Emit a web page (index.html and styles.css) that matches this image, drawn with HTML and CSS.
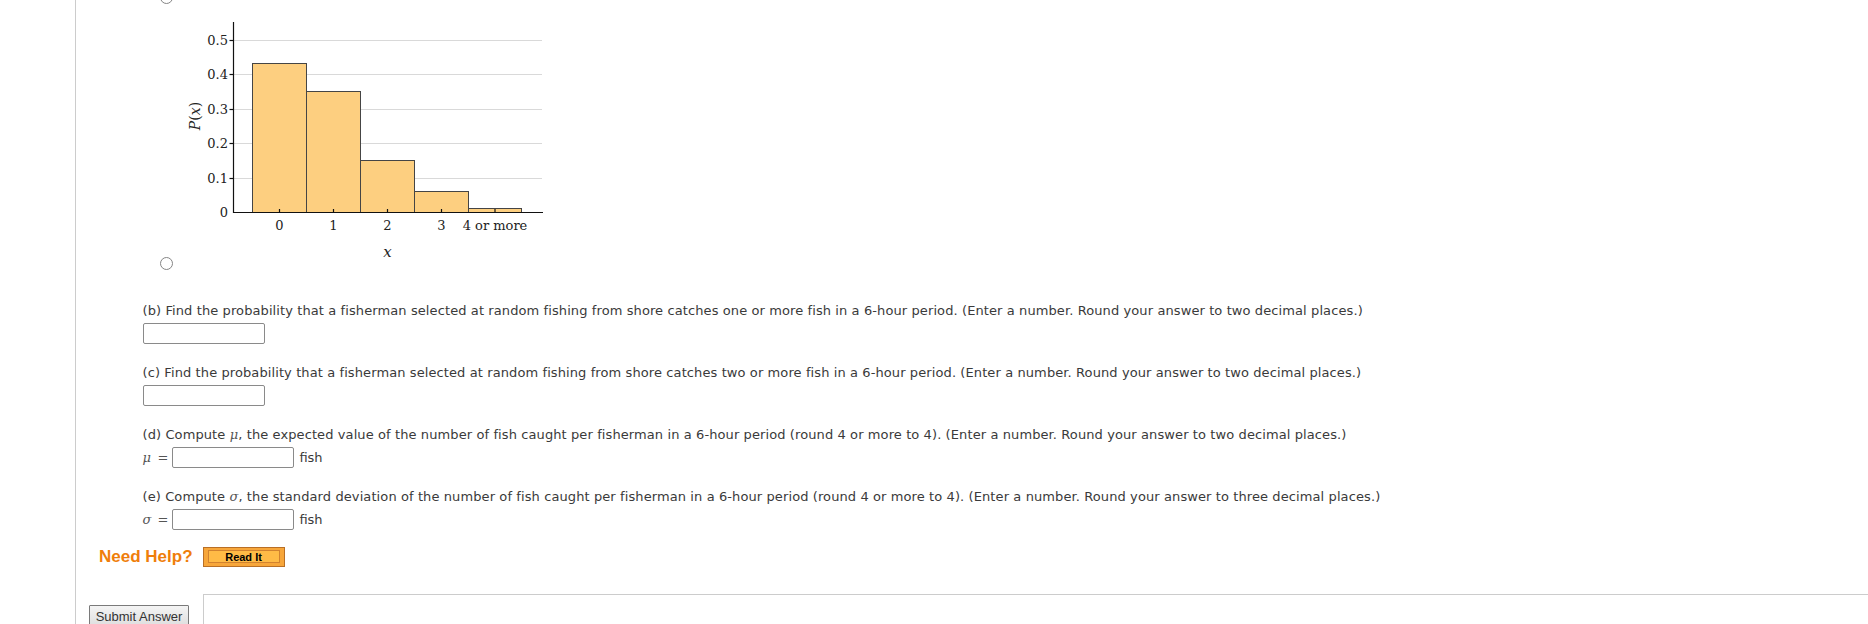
FILE: index.html
```html
<!DOCTYPE html>
<html>
<head>
<meta charset="utf-8">
<link rel="stylesheet" href="styles.css">
</head>
<body>
<div class="page">
  <div class="option option-prev"><span class="radio"></span></div>
  <div class="option option-graph">
    <span class="radio"></span>
    <svg class="graph" width="370" height="255" viewBox="0 0 370 255">
      <g class="grid">
        <line x1="53.5" y1="163.5" x2="362" y2="163.5"/>
        <line x1="53.5" y1="128.5" x2="362" y2="128.5"/>
        <line x1="53.5" y1="94.5" x2="362" y2="94.5"/>
        <line x1="53.5" y1="59.5" x2="362" y2="59.5"/>
        <line x1="53.5" y1="25.5" x2="362" y2="25.5"/>
      </g>
      <g class="bars">
        <rect x="72.5" y="48.5" width="54" height="149"/>
        <rect x="126.5" y="76.5" width="54" height="121"/>
        <rect x="180.5" y="145.5" width="54" height="52"/>
        <rect x="234.5" y="176.5" width="54" height="21"/>
        <rect x="288.5" y="193.5" width="53" height="4"/>
      </g>
      <g class="axis">
        <line x1="53.5" y1="7" x2="53.5" y2="198"/>
        <line x1="53" y1="197.5" x2="363" y2="197.5"/>
        <line x1="49.5" y1="163.5" x2="53.5" y2="163.5"/>
        <line x1="49.5" y1="128.5" x2="53.5" y2="128.5"/>
        <line x1="49.5" y1="94.5" x2="53.5" y2="94.5"/>
        <line x1="49.5" y1="59.5" x2="53.5" y2="59.5"/>
        <line x1="49.5" y1="25.5" x2="53.5" y2="25.5"/>
        <line x1="99.5" y1="194" x2="99.5" y2="197.5"/>
        <line x1="153.5" y1="194" x2="153.5" y2="197.5"/>
        <line x1="207.5" y1="194" x2="207.5" y2="197.5"/>
        <line x1="261.5" y1="194" x2="261.5" y2="197.5"/>
        <line x1="315" y1="194" x2="315" y2="197.5"/>
      </g>
      <g class="ylabels">
        <text x="48" y="202">0</text>
        <text x="48" y="168">0.1</text>
        <text x="48" y="133">0.2</text>
        <text x="48" y="99">0.3</text>
        <text x="48" y="64">0.4</text>
        <text x="48" y="30">0.5</text>
      </g>
      <g class="xlabels">
        <text x="99.5" y="215">0</text>
        <text x="153.5" y="215">1</text>
        <text x="207.5" y="215">2</text>
        <text x="261.5" y="215">3</text>
        <text x="315" y="215">4 or more</text>
      </g>
      <text class="xtitle" x="207.5" y="242">x</text>
      <text class="ytitle" transform="translate(20,101) rotate(-90)"><tspan class="it">P</tspan>(<tspan class="it">x</tspan>)</text>
    </svg>
  </div>

  <div class="parts">
    <div class="part">
      <div class="prompt">(b) Find the probability that a fisherman selected at random fishing from shore catches one or more fish in a 6-hour period. (Enter a number. Round your answer to two decimal places.)</div>
      <div class="answer"><input class="box" type="text"></div>
    </div>
    <div class="part">
      <div class="prompt">(c) Find the probability that a fisherman selected at random fishing from shore catches two or more fish in a 6-hour period. (Enter a number. Round your answer to two decimal places.)</div>
      <div class="answer"><input class="box" type="text"></div>
    </div>
    <div class="part">
      <div class="prompt">(d) Compute <span class="math">μ</span>, the expected value of the number of fish caught per fisherman in a 6-hour period (round 4 or more to 4). (Enter a number. Round your answer to two decimal places.)</div>
      <div class="answer"><span class="math var">μ</span><span class="eq">=</span><input class="box" type="text"><span class="unit">fish</span></div>
    </div>
    <div class="part part-last">
      <div class="prompt">(e) Compute <span class="math">σ</span>, the standard deviation of the number of fish caught per fisherman in a 6-hour period (round 4 or more to 4). (Enter a number. Round your answer to three decimal places.)</div>
      <div class="answer"><span class="math var">σ</span><span class="eq">=</span><input class="box" type="text"><span class="unit">fish</span></div>
    </div>
  </div>

  <div class="help">
    <span class="need-help">Need Help?</span>
    <button class="read-it" type="button"><span class="read-inner">Read It</span></button>
  </div>

  <div class="submit-row">
    <button class="submit" type="button">Submit Answer</button>
    <div class="notes"></div>
  </div>
</div>
</body>
</html>
```

FILE: styles.css
```css
html, body {
  margin: 0;
  padding: 0;
  overflow: hidden;
  background: #fff;
}

.page {
  margin-left: 75px;
  border-left: 1px solid #cccccc;
  min-height: 720px;
  font-family: "DejaVu Sans", Verdana, sans-serif;
  font-size: 13px;
  color: #3a3a3a;
}

.option {
  display: flex;
  align-items: flex-end;
}

.option-prev {
  margin-top: -9px;
  height: 13px;
}

.option-graph {
  margin-top: 11px;
}

.radio {
  flex: none;
  display: block;
  width: 13px;
  height: 13px;
  box-sizing: border-box;
  border: 1px solid #858585;
  border-radius: 50%;
  background: #fff;
  margin-left: 84px;
}

.graph {
  display: block;
  margin-left: 7px;
}

.graph .grid line {
  stroke: #d9d9d9;
  stroke-width: 1;
}

.graph .bars rect {
  fill: #fdcf80;
  stroke: #454545;
  stroke-width: 1;
}

.graph .axis line {
  stroke: #111;
  stroke-width: 1.2;
}

.graph text {
  font-family: "DejaVu Serif", "Liberation Serif", serif;
  font-size: 13px;
  fill: #222;
}

.graph .ylabels text {
  text-anchor: end;
}

.graph .xlabels text {
  text-anchor: middle;
}

.graph .xtitle {
  font-size: 15px;
  font-style: italic;
  text-anchor: middle;
}

.graph .ytitle {
  font-size: 14px;
  text-anchor: middle;
}

.graph .ytitle .it {
  font-style: italic;
}

.parts {
  margin-top: 33px;
  padding-left: 66.5px;
}

.part {
  margin-bottom: 21px;
}

.part-last {
  margin-bottom: 0;
}

.prompt {
  line-height: 16px;
  white-space: nowrap;
  letter-spacing: 0.1px;
}

.math {
  font-family: "DejaVu Serif", "Liberation Serif", serif;
  font-style: italic;
  color: #555;
}

.answer {
  display: flex;
  align-items: center;
  margin-top: 4px;
  height: 21px;
}

.var {
  width: 10px;
  font-size: 13px;
}

.eq {
  margin-left: 5px;
  margin-right: 4px;
  color: #555;
}

.box {
  box-sizing: border-box;
  width: 122px;
  height: 21px;
  margin: 0;
  padding: 1px 3px;
  border: 1px solid #8a8a8a;
  border-radius: 2px;
  background: #fff;
  font: 13px "DejaVu Sans", sans-serif;
}

.unit {
  margin-left: 5px;
}

.help {
  display: flex;
  align-items: center;
  margin-top: 17px;
  padding-left: 23px;
}

.need-help {
  font-family: "Liberation Sans", Arial, sans-serif;
  font-weight: bold;
  font-size: 17px;
  line-height: 20px;
  color: #ef7e0b;
}

.read-it {
  box-sizing: border-box;
  width: 82px;
  height: 20px;
  margin: 0 0 0 10px;
  padding: 2px 4px 3px 4px;
  border: 1px solid #b96f25;
  background: #f7a63a;
  display: flex;
  cursor: pointer;
}

.read-inner {
  flex: 1;
  display: flex;
  align-items: center;
  justify-content: center;
  border: 1px solid #d1822f;
  background: #ffbb46;
  font-family: "Liberation Sans", Arial, sans-serif;
  font-weight: bold;
  font-size: 11px;
  color: #000;
}

.submit-row {
  display: flex;
  align-items: flex-start;
  margin-top: 27px;
}

.submit {
  box-sizing: border-box;
  width: 100px;
  height: 22px;
  margin: 11px 0 0 13px;
  padding: 0;
  border: 1px solid #7a7a7a;
  border-radius: 1px;
  background: linear-gradient(#f4f4f4, #dedede);
  font-family: "Liberation Sans", Arial, sans-serif;
  font-size: 13px;
  color: #333;
}

.notes {
  flex: 1;
  height: 80px;
  margin-left: 14px;
  margin-right: -20px;
  border: 1px solid #cccccc;
}
```
